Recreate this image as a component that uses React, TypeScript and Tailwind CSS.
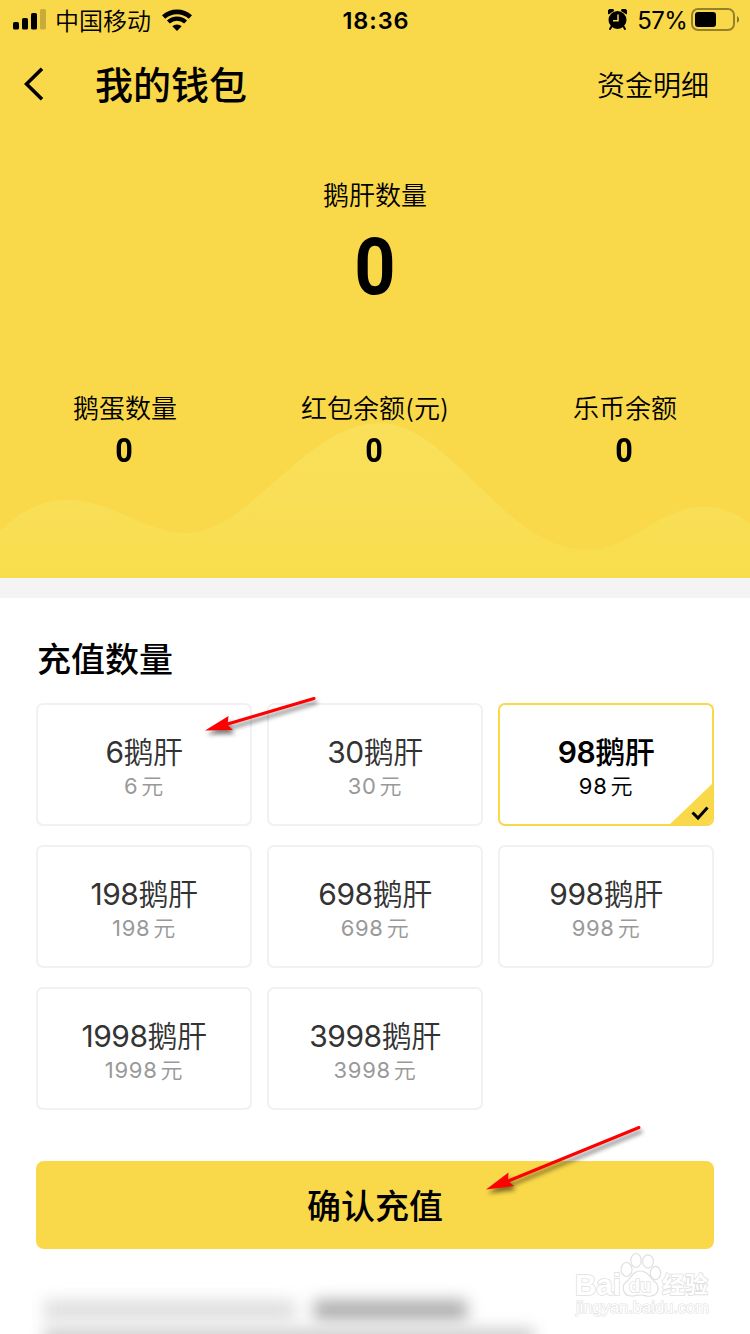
import React from "react";

type Pack = { amount: number; selected?: boolean };

const packs: Pack[] = [
  { amount: 6 },
  { amount: 30 },
  { amount: 98, selected: true },
  { amount: 198 },
  { amount: 698 },
  { amount: 998 },
  { amount: 1998 },
  { amount: 3998 },
];

const balances = ["鹅蛋数量", "红包余额(元)", "乐币余额"];

function StatusBar() {
  return (
    <div className="flex h-10 items-center justify-between pl-[13px] pr-[11px]">
      <div className="flex w-[240px] items-center">
        <svg width="33" height="22" viewBox="0 0 33 22">
          <rect x="0" y="13" width="6" height="7.5" rx="1.6" />
          <rect x="9" y="9" width="6" height="11.5" rx="1.6" />
          <rect x="18" y="4" width="6" height="16.5" rx="1.6" />
          <rect x="27" y="0" width="6" height="20.5" rx="1.6" opacity="0.2" />
        </svg>
        <span className="ml-[9px] pt-[3px] text-[24px] font-[350] leading-10">中国移动</span>
        <svg className="ml-[11px]" width="30" height="22" viewBox="0 0 30 22" fill="none" stroke="#000">
          <path d="M1.6 8 A20 20 0 0 1 28.4 8" strokeWidth="4.8" />
          <path d="M6.4 13 A12.5 12.5 0 0 1 23.6 13" strokeWidth="4.2" />
          <path d="M15 22 L10.3 17.3 A6.8 6.8 0 0 1 19.7 17.3 Z" fill="#000" stroke="none" />
        </svg>
      </div>
      <span className="pt-[2px] text-[23.5px] font-semibold leading-10 tracking-[0.9px]">18:36</span>
      <div className="flex w-[240px] items-center justify-end">
        <svg width="19" height="22" viewBox="0 0 19 22">
          <path d="M0.5 5.5 A3.4 3.4 0 0 1 5.8 0.8 L6 2 Z M18.5 5.5 A3.4 3.4 0 0 0 13.2 0.8 L13 2 Z" />
          <path d="M3.5 17.5 L2 20 M15.5 17.5 L17 20" stroke="#000" strokeWidth="2" strokeLinecap="round" />
          <circle cx="9.5" cy="11" r="9" />
          <path d="M10 5.5 V11.7 H5" fill="none" stroke="#f9d84a" strokeWidth="1.5" />
        </svg>
        <span className="ml-[10px] pt-[2px] text-[24px] leading-10 tracking-[-0.7px]">57%</span>
        <svg className="ml-1" width="48" height="24" viewBox="0 0 48 24">
          <rect x="1" y="1" width="42" height="21" rx="6" fill="none" stroke="#000" strokeWidth="2" opacity="0.4" />
          <rect x="4" y="4" width="21" height="15" rx="3" />
          <path d="M46 8 A4 4 0 0 1 46 15 Z" opacity="0.45" />
        </svg>
      </div>
    </div>
  );
}

function Wave() {
  return (
    <svg className="absolute bottom-0 left-0" width="750" height="158" viewBox="0 420 750 158">
      <defs>
        <linearGradient id="wave" x1="0" y1="0" x2="0" y2="1">
          <stop offset="0" stopColor="#fadf5a" />
          <stop offset="0.5" stopColor="#f9df57" />
          <stop offset="1" stopColor="#f8dd4b" />
        </linearGradient>
      </defs>
      <path
        d="M0 531 C22 509 44 500 68 500 C112 500 146 533 186 533 C250 533 305 423 380 423 C450 423 505 549.5 586 549.5 C636 549.5 655 507 705 507 C722 507 736 513 750 524 V578 H0 Z"
        fill="url(#wave)"
      />
    </svg>
  );
}

function PackCard({ amount, selected }: Pack) {
  return (
    <button
      className={
        selected
          ? "relative flex h-[123px] flex-col items-center overflow-hidden rounded-[7px] border-2 border-[#f9d84a] pt-[27px] text-black"
          : "flex h-[123px] flex-col items-center rounded-[7px] border-2 border-[#f1f1f5] pt-[27px] text-[#333]"
      }
    >
      <span
        className={
          selected
            ? "text-[30px] font-medium leading-[40px] tracking-[-0.5px]"
            : "text-[30px] font-[350] leading-[40px] tracking-[-0.5px]"
        }
      >
        <span className={selected ? "font-semibold" : "font-normal"}>{amount}</span>鹅肝
      </span>
      <span
        className={
          selected
            ? "text-[22px] font-normal leading-[28px] tracking-[0.7px]"
            : "text-[22px] font-normal leading-[28px] tracking-[0.7px] text-[#999]"
        }
      >
        {amount}
        <span className="ml-[3px] font-[350]">元</span>
      </span>
      {selected && (
        <svg className="absolute bottom-[-2px] right-[-2px]" width="46" height="44" viewBox="0 0 46 44">
          <path d="M46 0 V44 H0 Z" fill="#f9d84a" />
          <path d="M24.5 30.5 L30 36 L39.5 25.5" fill="none" stroke="#000" strokeWidth="3" />
        </svg>
      )}
    </button>
  );
}

function Arrows() {
  return (
    <svg className="pointer-events-none absolute left-0 top-0 drop-shadow-[2px_4px_2px_rgba(0,0,0,0.5)]" width="750" height="1334" viewBox="0 0 750 1334">
      <g fill="#fe0000" stroke="#fe0000">
        <path d="M226 724.5 L314 698.5" strokeWidth="3" strokeLinecap="round" />
        <path d="M205 730.5 L228.5 716 L227.5 725 L233 730 Z" stroke="none" />
        <path d="M507 1181.5 L639 1127.5" strokeWidth="3" strokeLinecap="round" />
        <path d="M486 1189.5 L508.5 1172.5 L508 1181 L514 1186 Z" stroke="none" />
      </g>
    </svg>
  );
}

function Watermark() {
  return (
    <svg className="absolute left-[570px] top-[1250px]" width="145" height="72" viewBox="570 1250 145 72">
      <g fill="#fff" stroke="#e0e0e0" strokeWidth="1.2">
        <ellipse cx="626.5" cy="1269.5" rx="5.5" ry="7" />
        <ellipse cx="636" cy="1260.5" rx="5.2" ry="7" />
        <ellipse cx="648" cy="1261.5" rx="5.4" ry="6.6" />
        <ellipse cx="655.5" cy="1273" rx="5.2" ry="6.6" />
        <path d="M640.5 1271 C632 1271 631 1279 626 1282 C621 1286 623 1296 631 1296 C636 1296 637 1295 641 1295 C645 1295 646 1297 651 1296 C659 1295 660 1286 655 1282 C650 1278 648 1271 640.5 1271 Z" />
      </g>
      <g fill="#fff" stroke="#e0e0e0" strokeWidth="1.6" paintOrder="stroke" fontWeight="700" fontFamily="Liberation Sans, Noto Sans CJK SC, sans-serif">
        <text x="575" y="1295" fontSize="30" textLength="46" lengthAdjust="spacingAndGlyphs">Bai</text>
        <text x="629" y="1291.5" fontSize="19" textLength="22" lengthAdjust="spacingAndGlyphs">du</text>
        <text x="662" y="1293" fontSize="23" textLength="46">经验</text>
        <text x="576" y="1312.5" fontSize="16" fontWeight="400" strokeWidth="1.2" textLength="133" lengthAdjust="spacingAndGlyphs">jingyan.baidu.com</text>
      </g>
    </svg>
  );
}

function BlurredNotice() {
  return (
    <div className="mt-[51px] flex h-[34px] flex-col gap-[9px] pl-2">
      <div className="flex h-[20px] shrink-0 gap-[18px] blur-[8px]">
        <div className="h-full w-[252px] bg-[#dedede]" />
        <div className="h-full w-[153px] bg-[#acacac]" />
      </div>
      <div className="h-[18px] w-[490px] shrink-0 bg-[#cacaca] blur-[8px]" />
    </div>
  );
}

export default function App() {
  return (
    <div className="relative flex h-[1334px] w-[750px] flex-col overflow-hidden bg-white font-[Inter,'Noto_Sans_CJK_SC',sans-serif] text-black">
      <header className="relative h-[578px] shrink-0 bg-[#f9d84a]">
        <Wave />
        <div className="relative flex flex-col">
          <StatusBar />
          <nav className="flex h-[88px] items-center pl-[24px] pr-[41px]">
            <svg width="20" height="34" viewBox="0 0 20 34" fill="none" stroke="#000" strokeWidth="3.6">
              <path d="M18 1.8 L2.5 17 L18 32.2" />
            </svg>
            <h1 className="ml-[51px] pt-[2px] text-[38px] font-medium leading-[56px]">我的钱包</h1>
            <span className="ml-auto pt-[3px] text-[28px] font-[350] leading-10">资金明细</span>
          </nav>
          <section className="flex flex-col items-center pt-[48px]">
            <span className="text-[26px] font-[350] leading-10">鹅肝数量</span>
            <span className="mt-[11px] scale-x-90 pr-px font-[Roboto] text-[80px] font-bold leading-[80px]">0</span>
          </section>
          <section className="mt-[82px] grid grid-cols-3">
            {balances.map((label) => (
              <div key={label} className="flex flex-col items-center">
                <span className="text-[26px] font-[350] leading-10">{label}</span>
                <span className="mt-px scale-x-90 pr-[3px] font-[Roboto] text-[34px] font-bold leading-[40px]">0</span>
              </div>
            ))}
          </section>
        </div>
      </header>
      <div className="h-5 shrink-0 bg-[#f4f4f4]" />
      <main className="flex flex-col px-9 pt-[37px]">
        <h2 className="pl-px text-[34px] font-medium leading-[50px]">充值数量</h2>
        <div className="mt-[18px] grid grid-cols-3 gap-x-[15px] gap-y-[19px]">
          {packs.map((pack) => (
            <PackCard key={pack.amount} {...pack} />
          ))}
        </div>
        <button className="mt-[51px] h-[88px] rounded-[8px] bg-[#f9d84a] pt-[2px] text-[34px] font-medium">确认充值</button>
        <BlurredNotice />
      </main>
      <Watermark />
      <Arrows />
    </div>
  );
}
